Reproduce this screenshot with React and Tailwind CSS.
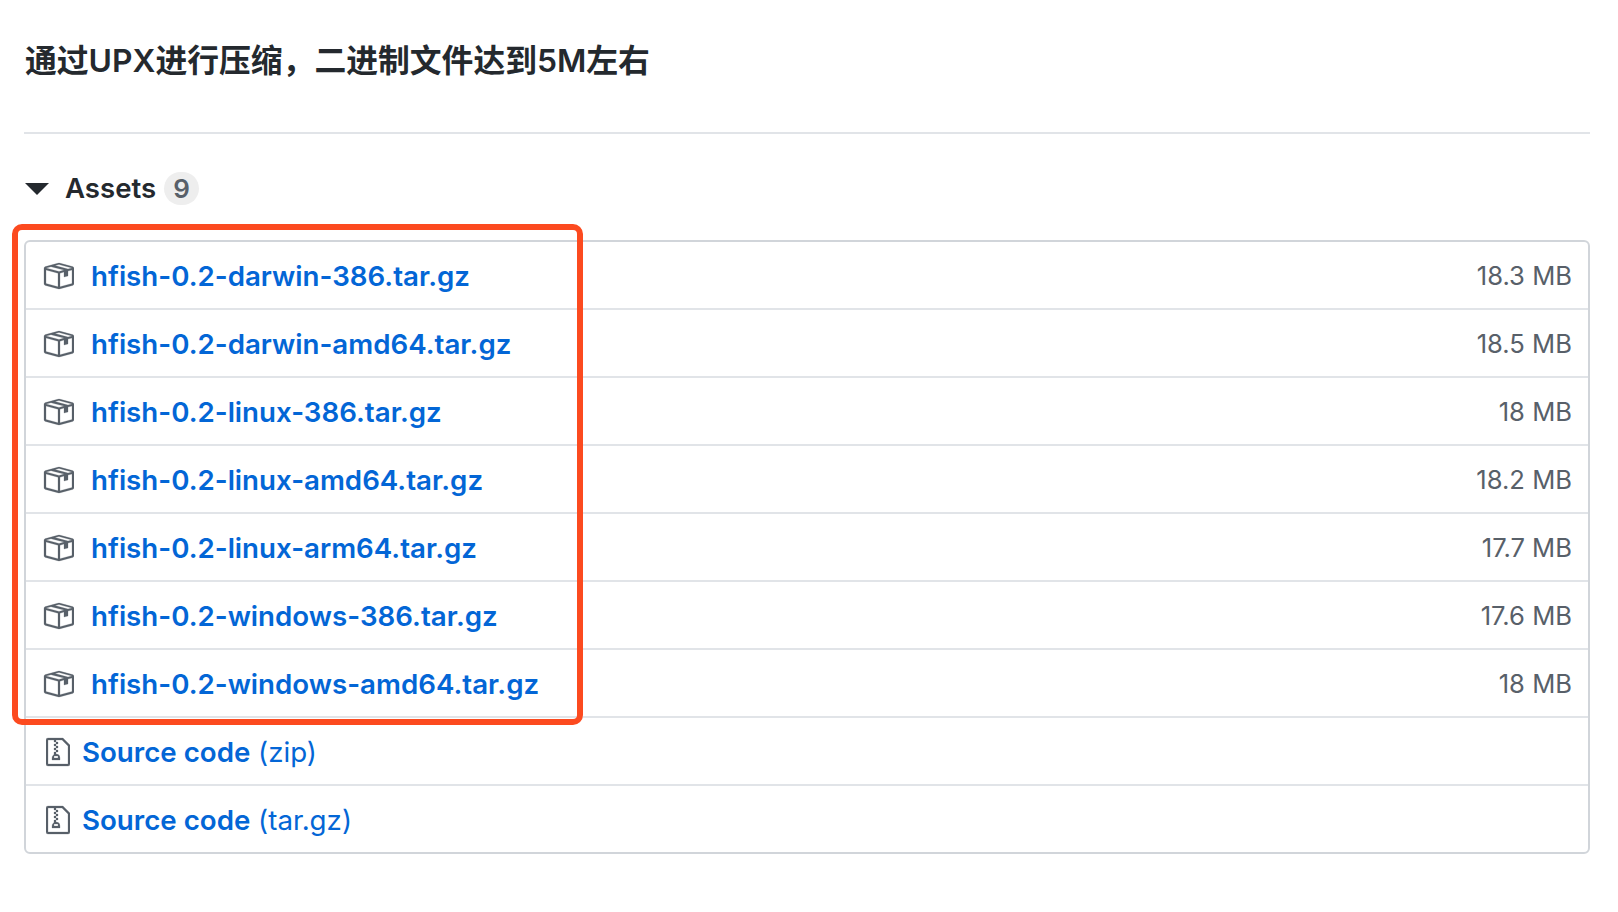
const PackageIcon = () => (
  <svg viewBox="0 0 16 16" className="w-8 h-8 shrink-0 fill-[#586069] stroke-[#586069] stroke-[0.12]">
    <path
      fillRule="evenodd"
      d="M1 4.27v7.47c0 .45.3.84.75.97l6.5 1.73c.16.05.34.05.5 0l6.5-1.73c.45-.13.75-.52.75-.97V4.27c0-.45-.3-.84-.75-.97l-6.5-1.74a1.4 1.4 0 0 0-.5 0L1.75 3.3c-.45.13-.75.52-.75.97zm7 9.09l-6-1.59V5l6 1.61v6.75zM2 4l2.5-.67L11 5.06l-2.5.67L2 4zm13 7.77l-6 1.59V6.61l2-.55V8.5l2-.53V5.53L15 5v6.77zm-2-7.24L6.5 2.8l2-.53L15 4l-2 .53z"
    />
  </svg>
);

const ZipIcon = () => (
  <svg viewBox="0 0 12 16" className="w-6 h-8 shrink-0 fill-[#586069] stroke-[#586069] stroke-[0.12]">
    <path
      fillRule="evenodd"
      d="M8.5 1H1a1 1 0 0 0-1 1v12a1 1 0 0 0 1 1h10a1 1 0 0 0 1-1V4.5L8.5 1zM11 14H1V2h3v1h1V2h3l3 3v9zM5 4V3h1v1H5zM4 4h1v1H4V4zm1 2V5h1v1H5zM4 6h1v1H4V6zm1 2V7h1v1H5zM4 9.28A2 2 0 0 0 3 11v1h4v-1a2 2 0 0 0-2-2V8H4v1.28zM6 10v1H4v-1h2z"
    />
  </svg>
);

const assets = [
  { name: "hfish-0.2-darwin-386.tar.gz", size: "18.3 MB" },
  { name: "hfish-0.2-darwin-amd64.tar.gz", size: "18.5 MB" },
  { name: "hfish-0.2-linux-386.tar.gz", size: "18 MB" },
  { name: "hfish-0.2-linux-amd64.tar.gz", size: "18.2 MB" },
  { name: "hfish-0.2-linux-arm64.tar.gz", size: "17.7 MB" },
  { name: "hfish-0.2-windows-386.tar.gz", size: "17.6 MB" },
  { name: "hfish-0.2-windows-amd64.tar.gz", size: "18 MB" },
];

const App = () => {
  return (
    <div className="min-h-[912px] bg-white pl-[24px] pr-[28px] font-['Inter','Noto_Sans_CJK_SC',sans-serif] text-[#24292e]">
      <h1 className="pt-[40px] pl-[1px] h-[134px] text-[31.8px] leading-[42px] font-semibold border-b-2 border-[#e1e4e8]">
        通过UPX进行压缩{"\uFF0C"}二进制文件达到5M左右
      </h1>

      <div className="flex items-center h-[33px] mt-[38px] pl-[1px]">
        <span className="w-0 h-0 border-x-[12px] border-x-transparent border-t-[12px] border-t-[#24292e]" />
        <span className="ml-[16px] text-[27.6px] font-semibold">Assets</span>
        <span className="ml-[8px] w-[35px] h-[33px] rounded-full bg-[#eeeeee] flex items-center justify-center text-[26px] font-semibold text-[#586069]">
          9
        </span>
      </div>

      <div className="relative mt-[35px]">
        <div className="border-2 border-[#d1d5da] rounded-[6px]">
          {assets.map((a) => (
            <div
              key={a.name}
              className="flex items-center justify-between h-[68px] border-b-2 border-[#e1e4e8] pt-[2px] pl-[16px] pr-[16px]"
            >
              <div className="flex items-center gap-[17px]">
                <PackageIcon />
                <a className="pt-[2px] text-[27.7px] font-semibold text-[#0366d6]">{a.name}</a>
              </div>
              <span className="text-[25.6px] text-[#586069]">{a.size}</span>
            </div>
          ))}
          <div className="flex items-center h-[68px] border-b-2 border-[#e1e4e8] pt-[2px] pl-[20px] gap-[12px]">
            <ZipIcon />
            <a className="pt-[2px] text-[27.7px] text-[#0366d6]">
              <span className="font-semibold">Source code</span> (zip)
            </a>
          </div>
          <div className="flex items-center h-[66px] pt-[2px] pl-[20px] gap-[12px]">
            <ZipIcon />
            <a className="pt-[2px] text-[27.7px] text-[#0366d6]">
              <span className="font-semibold">Source code</span> (tar.gz)
            </a>
          </div>
        </div>
        <div className="absolute left-[-12px] top-[-16px] w-[571px] h-[501px] border-[6px] border-[#fc4a1f] rounded-[10px]" />
      </div>
    </div>
  );
};

export default App;
